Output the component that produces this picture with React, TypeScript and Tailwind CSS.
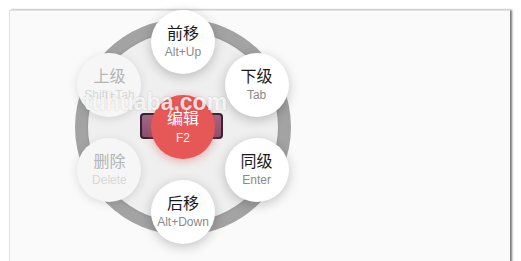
import React from 'react';

type Item = {
  label: string;
  key: string;
  x: number;
  y: number;
  disabled?: boolean;
};

// wheel box is 216x216, node centres sit on a 85px radius
const items: Item[] = [
  { label: '前移', key: 'Alt+Up', x: 108, y: 23 },
  { label: '下级', key: 'Tab', x: 181.6, y: 65.5 },
  { label: '同级', key: 'Enter', x: 181.6, y: 150.5 },
  { label: '后移', key: 'Alt+Down', x: 108, y: 193 },
  { label: '删除', key: 'Delete', x: 34.4, y: 150.5, disabled: true },
  { label: '上级', key: 'Shift+Tab', x: 34.4, y: 65.5, disabled: true },
];

function Node({ item }: { item: Item }) {
  return (
    <div
      className={`absolute flex h-[64px] w-[64px] -translate-x-1/2 -translate-y-1/2 flex-col items-center justify-center rounded-full ${
        item.disabled
          ? 'bg-[#f6f6f6] shadow-[0_2px_10px_rgba(0,0,0,0.12)]'
          : 'bg-white shadow-[0_3px_12px_rgba(0,0,0,0.22)]'
      }`}
      style={{ left: item.x, top: item.y }}
    >
      <span
        className={`text-[16px] leading-[20px] ${
          item.disabled ? 'text-[#b4b4b4]' : 'text-[#1a1a1a]'
        }`}
      >
        {item.label}
      </span>
      <span
        className={`mt-[1px] text-[12px] leading-[15px] ${
          item.disabled ? 'text-[#d8d8d8]' : 'text-[#8a8a8a]'
        }`}
      >
        {item.key}
      </span>
    </div>
  );
}

export default function App() {
  return (
    <div
      className="relative h-[261px] w-[521px] overflow-hidden bg-white"
      style={{ fontFamily: '"Liberation Sans", "Noto Sans CJK SC", sans-serif' }}
    >
      {/* Panel */}
      <div className="ml-[9px] mt-[10px] h-[260px] w-[501px] border-l border-t border-[#e2e2e2] bg-[#fafafa] pl-[65px] pt-[8px] shadow-[2px_0_2px_rgba(0,0,0,0.55)]">
        {/* Wheel */}
        <div className="relative h-[216px] w-[216px] rounded-full bg-[#a3a3a3] p-[13px]">
          <div className="h-full w-full rounded-full bg-[#efefef] shadow-[0_0_3px_rgba(0,0,0,0.15)]" />

          {/* purple bar behind the centre */}
          <div className="absolute left-[65px] top-[94px] h-[26px] w-[83px] rounded-[4px] border-2 border-[#3a2230] bg-gradient-to-b from-[#a06888] to-[#84506f]" />

          {/* centre button */}
          <div className="absolute left-[76px] top-[76px] flex h-[64px] w-[64px] flex-col items-center justify-center rounded-full bg-[#e65757] shadow-[0_2px_10px_rgba(230,80,80,0.45)]">
            <span className="text-[16px] leading-[20px] text-white">编辑</span>
            <span className="mt-[2px] text-[12px] leading-[15px] text-white/90">F2</span>
          </div>

          {items.map((item) => (
            <Node key={item.label} item={item} />
          ))}
        </div>
      </div>

      {/* watermark */}
      <div className="pointer-events-none absolute left-[84px] top-[88px] text-[23px] font-bold leading-[28px] text-white/80 [text-shadow:0_0_2px_rgba(0,0,0,0.2)]">
        tuhuaba.com
      </div>
    </div>
  );
}
